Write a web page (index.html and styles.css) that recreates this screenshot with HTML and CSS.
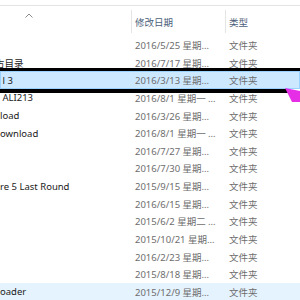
FILE: index.html
```html
<!DOCTYPE html>
<html lang="zh-CN">
<head>
    <meta charset="UTF-8">
    <title>文件列表</title>
    <link rel="stylesheet" href="styles.css">
</head>
<body>
    <div class="top-line"></div>
    <div class="header">
        <div class="col-name">
            <svg class="caret" width="8" height="5" viewBox="0 0 8 5"><path d="M0.5 4.5 L4 1 L7.5 4.5" fill="none" stroke="#8a8a8a" stroke-width="1"/></svg>
        </div>
        <div class="col-head">修改日期</div>
        <div class="col-head">类型</div>
    </div>

    <div class="list">
        <div class="row"><span class="name"></span><span class="date">2016/5/25 星期…</span><span class="type">文件夹</span></div>
        <div class="row"><span class="name shift">占目录</span><span class="date">2016/7/17 星期…</span><span class="type">文件夹</span></div>
        <div class="row selected">
            <span class="name">&nbsp;l 3</span><span class="date">2016/3/13 星期…</span><span class="type">文件夹</span>
            <svg class="pointer" width="16" height="16" viewBox="0 0 16 16"><polygon points="1,2 16,5 16,16 8,16" fill="#e62ee6"/></svg>
        </div>
        <div class="row"><span class="name">&nbsp;ALI213</span><span class="date">2016/8/1 星期一 …</span><span class="type">文件夹</span></div>
        <div class="row"><span class="name">load</span><span class="date">2016/3/26 星期…</span><span class="type">文件夹</span></div>
        <div class="row"><span class="name">ownload</span><span class="date">2016/8/1 星期一 …</span><span class="type">文件夹</span></div>
        <div class="row"><span class="name"></span><span class="date">2016/7/27 星期…</span><span class="type">文件夹</span></div>
        <div class="row"><span class="name"></span><span class="date">2016/7/30 星期…</span><span class="type">文件夹</span></div>
        <div class="row"><span class="name">re 5 Last Round</span><span class="date">2015/9/15 星期…</span><span class="type">文件夹</span></div>
        <div class="row"><span class="name"></span><span class="date">2016/6/15 星期…</span><span class="type">文件夹</span></div>
        <div class="row"><span class="name"></span><span class="date">2015/6/2 星期二 …</span><span class="type">文件夹</span></div>
        <div class="row"><span class="name"></span><span class="date">2015/10/21 星期…</span><span class="type">文件夹</span></div>
        <div class="row"><span class="name"></span><span class="date">2016/2/23 星期…</span><span class="type">文件夹</span></div>
        <div class="row"><span class="name"></span><span class="date">2015/8/18 星期…</span><span class="type">文件夹</span></div>
        <div class="row hover"><span class="name">oader</span><span class="date">2015/12/9 星期…</span><span class="type">文件夹</span></div>
    </div>
</body>
</html>
```

FILE: styles.css
```css
* {
    margin: 0;
    padding: 0;
    box-sizing: border-box;
}
body {
    background: #ffffff;
    font-family: 'Noto Sans', 'Noto Sans CJK SC', sans-serif;
    font-size: 9.5px;
    overflow: hidden;
    width: 300px;
    height: 300px;
}
.top-line {
    height: 6px;
    border-bottom: 1px solid #e3e3e3;
}
.header {
    display: grid;
    grid-template-columns: 131px 94px 1fr;
    height: 30.2px;
    padding: 4px 0 3px;
}
.col-name {
    position: relative;
}
.caret {
    position: absolute;
    left: 25px;
    top: 3px;
}
.col-head {
    border-left: 1px solid #e5e5e5;
    padding-left: 3px;
    display: flex;
    align-items: center;
    color: #4c607a;
}
.row {
    display: grid;
    grid-template-columns: 131px 94px 1fr;
    align-items: center;
    height: 17.65px;
    white-space: nowrap;
    position: relative;
}
.name {
    color: #1a1a1a;
    overflow: hidden;
}
.shift {
    margin-left: -5px;
}
.date, .type {
    color: #6d6d6d;
    padding-left: 4px;
    overflow: hidden;
}
.selected {
    background: #cce8ff;
    box-shadow: inset 0 0 0 1px #99d1ff;
}
/* heavy annotation lines drawn over the selected row */
.selected::before, .selected::after {
    content: "";
    position: absolute;
    left: 0;
    height: 3.5px;
    background: #000000;
}
.selected::before {
    top: -3.5px;
    right: 0;
}
.selected::after {
    bottom: -3.5px;
    right: 12px;
}
.pointer {
    position: absolute;
    right: 0;
    top: 15px;
    z-index: 2;
}
.hover {
    background: #e5f3ff;
}
```
